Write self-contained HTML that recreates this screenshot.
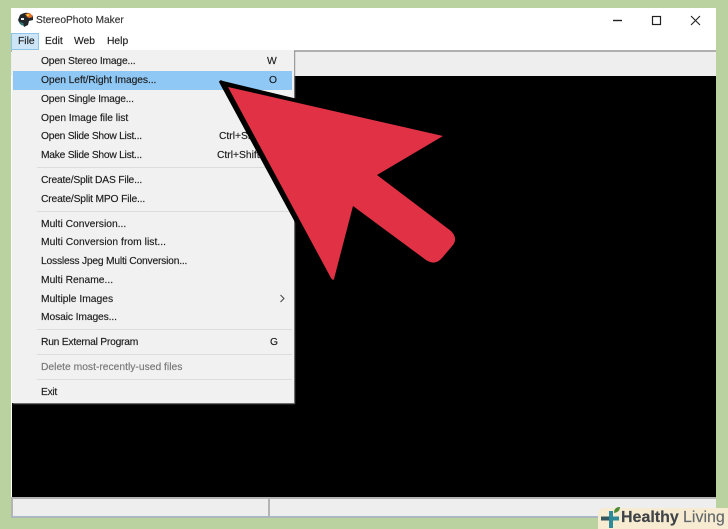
<!DOCTYPE html>
<html><head><meta charset="utf-8"><style>
html,body{margin:0;padding:0}
body{width:728px;height:529px;background:#bad2a0;position:relative;overflow:hidden;font-family:"Liberation Sans",sans-serif;font-size:10.3px;color:#1c1c1c}
div{position:absolute}
.t{white-space:nowrap;line-height:14px;height:14px;-webkit-text-stroke:0.15px currentColor}
.sep{left:37px;width:255px;height:1px;background:#dcdcdc}
</style></head><body>
<div style="left:11px;top:8px;width:705px;height:510px;background:#fff"></div>
<div style="left:11px;top:50px;width:705px;height:2px;background:#b0b0b0"></div>
<div style="left:11px;top:52px;width:705px;height:24px;background:#eeeeee"></div>
<div style="left:12px;top:76px;width:704px;height:421px;background:#000"></div>
<div style="left:11px;top:497px;width:705px;height:21px;background:#b4b4b4"></div>
<div style="left:13px;top:499px;width:255px;height:17px;background:#eee"></div>
<div style="left:270px;top:499px;width:446px;height:17px;background:#eee"></div>
<div style="left:11px;top:516px;width:705px;height:1px;background:#a3bace"></div>

<svg style="position:absolute;left:17px;top:12px" width="17" height="16" viewBox="0 0 17 16">
<path d="M3 3Q7 0 12 1L16 4L16 8L12 9L11 13L7 15L6 11L3 12L1 8Z" fill="#22282a"/>
<path d="M8 2L13 1L16 5L12 6L10 5Z" fill="#e8722a"/><circle cx="11" cy="3" r="1.2" fill="#f5d040"/>
<path d="M4 6L7 6L7 8L4 8Z" fill="#eee"/><path d="M2 10L6 11L7 14L4 13Z" fill="#2c7c78"/></svg>
<div class="t" style="left:36px;top:14px;font-size:10.2px;color:#333">StereoPhoto Maker</div>

<div style="left:11px;top:33px;width:26px;height:15px;background:#cde6f7;border:1px solid #8fc4e8"></div>
<div class="t" style="left:18px;top:35px;">File</div>
<div class="t" style="left:45px;top:35px;">Edit</div>
<div class="t" style="left:74px;top:35px;">Web</div>
<div class="t" style="left:107px;top:35px;">Help</div>

<svg style="position:absolute;left:610px;top:10px" width="110" height="20" fill="none" stroke="#222">
<path d="M3 10.5H12" stroke-width="1.4"/>
<rect x="42.5" y="6.5" width="8" height="8" stroke-width="1.2"/>
<path d="M81 6L90 15M90 6L81 15" stroke-width="1.1"/></svg>

<div style="left:12px;top:50px;width:282px;height:353px;background:#f1f1f1;box-shadow:1px 1px 1px #888"></div>
<div style="left:13px;top:71px;width:279px;height:19px;background:#90c8f5"></div>

<div class="t" style="left:41px;top:55px;letter-spacing:-.2px">Open Stereo Image...</div><div class="t" style="left:267px;top:55px">W</div>
<div class="t" style="left:41px;top:74px;letter-spacing:-.08px">Open Left/Right Images...</div><div class="t" style="left:269px;top:74px">O</div>
<div class="t" style="left:41px;top:93px;letter-spacing:-.2px">Open Single Image...</div>
<div class="t" style="left:41px;top:112px;letter-spacing:-.05px">Open Image file list</div>
<div class="t" style="left:41px;top:130px;letter-spacing:-.27px">Open Slide Show List...</div><div class="t" style="left:219px;top:130px">Ctrl+Shift+L</div>
<div class="t" style="left:41px;top:149px;letter-spacing:-.27px">Make Slide Show List...</div><div class="t" style="left:217px;top:149px">Ctrl+Shift+M</div>
<div class="sep" style="top:167px"></div>
<div class="t" style="left:41px;top:174px;letter-spacing:-.2px">Create/Split DAS File...</div>
<div class="t" style="left:41px;top:193px;letter-spacing:-.17px">Create/Split MPO File...</div>
<div class="sep" style="top:211px"></div>
<div class="t" style="left:41px;top:218px">Multi Conversion...</div>
<div class="t" style="left:41px;top:236px;letter-spacing:.03px">Multi Conversion from list...</div>
<div class="t" style="left:41px;top:255px;letter-spacing:-.22px">Lossless Jpeg Multi Conversion...</div>
<div class="t" style="left:41px;top:274px">Multi Rename...</div>
<div class="t" style="left:41px;top:293px">Multiple Images</div>
<svg style="position:absolute;left:279px;top:294px" width="6" height="9" fill="none" stroke="#444" stroke-width="1"><path d="M1.5 1L5 4.5L1.5 8"/></svg>
<div class="t" style="left:41px;top:311px;letter-spacing:-.12px">Mosaic Images...</div>
<div class="sep" style="top:329px"></div>
<div class="t" style="left:41px;top:336px;letter-spacing:-.24px">Run External Program</div><div class="t" style="left:270px;top:336px">G</div>
<div class="sep" style="top:354px"></div>
<div class="t" style="left:41px;top:361px;color:#777">Delete most-recently-used files</div>
<div class="sep" style="top:379px"></div>
<div class="t" style="left:41px;top:386px;letter-spacing:-.3px">Exit</div>

<svg style="position:absolute;left:0;top:0" width="728" height="529">
<path d="M219 82Q220 79 223 81L443 134L378 175L446 232L332 280L310 250Z" fill="#000"/>
<path d="M228 87L443 136L377 175L451 231Q458 238 453 245L442 258Q435 266 426 260L353 206L334 279Q333 281 331 278Z" fill="#e03244"/>
</svg>

<div style="left:598px;top:508px;width:130px;height:21px;background:#f7ecd2;border-radius:6px 0 0 0"></div>
<svg style="position:absolute;left:600px;top:505px" width="24" height="24">
<path d="M1 13.5H19M11 6V23" stroke="#2d8a98" stroke-width="4" fill="none"/>
<path d="M1 13.5H9" stroke="#35565e" stroke-width="4"/>
<path d="M14 8Q14 2 20 2Q20 7 14 8Z" fill="#4d8a35"/></svg>
<div class="t" style="left:621px;top:509px;height:18px;line-height:18px;font-size:16px;font-weight:bold;color:#3f4347">Healthy</div>
<div class="t" style="left:683px;top:509px;height:18px;line-height:18px;font-size:16px;color:#62686c">Living</div>
</body></html>
